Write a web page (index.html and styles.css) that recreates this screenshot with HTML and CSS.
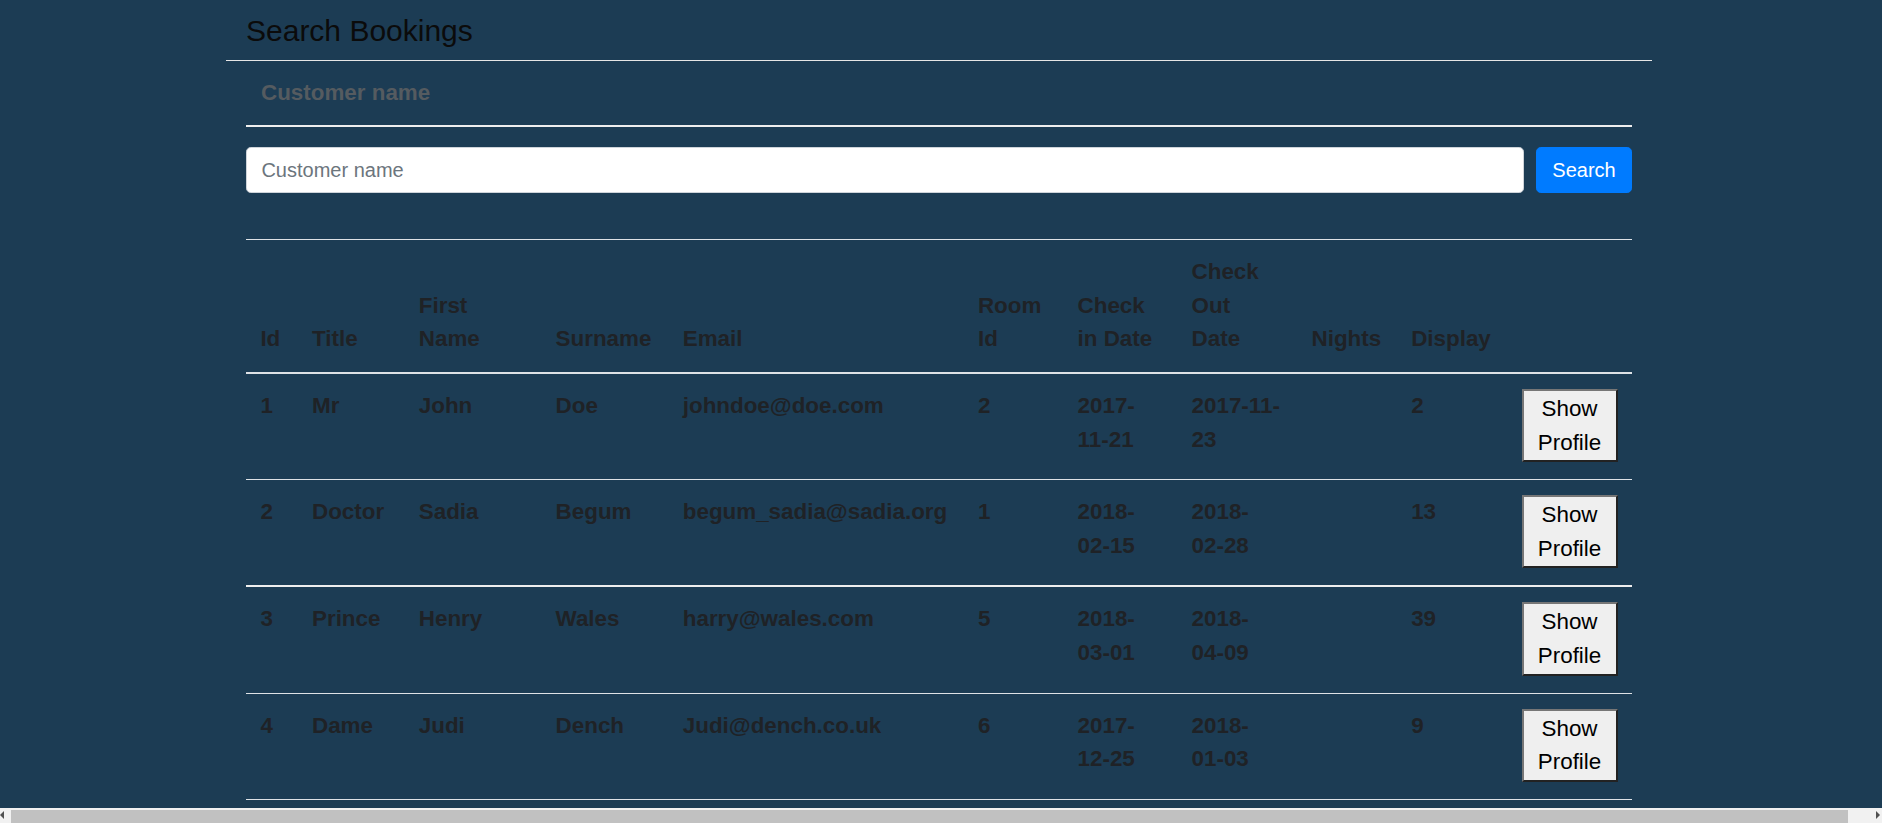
FILE: index.html
```html
<!DOCTYPE html>
<html lang="en">
<head>
<meta charset="utf-8">
<title>Search Bookings</title>
<link rel="stylesheet" href="styles.css">
</head>
<body>
<div class="page">
  <header class="page-header">
    <h1 class="page-title">Search Bookings</h1>
  </header>
  <main class="content">
    <div class="field-label">Customer name</div>
    <form class="search-row" onsubmit="return false">
      <input class="search-input" type="text" placeholder="Customer name">
      <button class="search-btn" type="submit">Search</button>
    </form>
    <table class="results">
      <colgroup>
        <col class="c-id"><col class="c-title"><col class="c-first"><col class="c-surname"><col class="c-email"><col class="c-room"><col class="c-in"><col class="c-out"><col class="c-nights"><col class="c-display"><col class="c-action">
      </colgroup>
      <thead>
        <tr>
          <th>Id</th><th>Title</th><th>First Name</th><th>Surname</th><th>Email</th><th>Room Id</th><th>Check in Date</th><th>Check Out Date</th><th>Nights</th><th>Display</th><th></th>
        </tr>
      </thead>
      <tbody>
        <tr>
          <td>1</td><td>Mr</td><td>John</td><td>Doe</td><td>johndoe@doe.com</td><td>2</td><td>2017-11-21</td><td class="date-out"><span class="nowrap">2017-11-</span>23</td><td></td><td>2</td>
          <td><button class="profile-btn" type="button">Show Profile</button></td>
        </tr>
        <tr class="row-strong">
          <td>2</td><td>Doctor</td><td>Sadia</td><td>Begum</td><td>begum_sadia@sadia.org</td><td>1</td><td>2018-02-15</td><td class="date-out">2018-02-28</td><td></td><td>13</td>
          <td><button class="profile-btn" type="button">Show Profile</button></td>
        </tr>
        <tr>
          <td>3</td><td>Prince</td><td>Henry</td><td>Wales</td><td>harry@wales.com</td><td>5</td><td>2018-03-01</td><td class="date-out">2018-04-09</td><td></td><td>39</td>
          <td><button class="profile-btn" type="button">Show Profile</button></td>
        </tr>
        <tr>
          <td>4</td><td>Dame</td><td>Judi</td><td>Dench</td><td>Judi@dench.co.uk</td><td>6</td><td>2017-12-25</td><td class="date-out">2018-01-03</td><td></td><td>9</td>
          <td><button class="profile-btn" type="button">Show Profile</button></td>
        </tr>
      </tbody>
    </table>
  </main>
</div>
<div class="hscroll" aria-hidden="true">
  <span class="hscroll-arrow hscroll-left"></span>
  <span class="hscroll-thumb"></span>
  <span class="hscroll-arrow hscroll-right"></span>
</div>
</body>
</html>
```

FILE: styles.css
```css
html, body {
  margin: 0;
  padding: 0;
}

body {
  background: #1c3c54;
  font-family: "Liberation Sans", Arial, sans-serif;
  color: #212529;
}

.page {
  width: 1426px;
  margin-left: 226px;
}

.page-header {
  padding: 14px 20px 11px;
  border-bottom: 1px solid #e6e6e6;
}

.page-title {
  margin: 0;
  font-size: 30px;
  font-weight: normal;
  line-height: 34.6px;
  color: #0b0b0b;
}

.content {
  padding: 0 20px;
}

.field-label {
  margin-top: 15px;
  padding: 0 15px 16px;
  font-size: 22.4px;
  line-height: 33.6px;
  font-weight: bold;
  color: #555b60;
  border-bottom: 2px solid #eeeeee;
}

.search-row {
  display: flex;
  gap: 12px;
  margin: 20px 0 46px;
}

.search-input {
  flex: 1;
  height: 46px;
  box-sizing: border-box;
  padding: 0 14.4px;
  border: 1px solid #ced4da;
  border-radius: 4.8px;
  background: #fff;
  font-family: inherit;
  font-size: 20px;
  color: #495057;
  outline: none;
}

.search-input::placeholder {
  color: #6c757d;
}

.search-btn {
  width: 96px;
  height: 46px;
  border: 1px solid #007bff;
  border-radius: 4.8px;
  background: #007bff;
  color: #fff;
  font-family: inherit;
  font-size: 20px;
  padding: 0;
  cursor: pointer;
}

.results {
  width: 1386px;
  table-layout: fixed;
  border-collapse: collapse;
  font-size: 22.4px;
  line-height: 33.6px;
  font-weight: bold;
  color: #1f2226;
}

.c-id { width: 51.6px; }
.c-title { width: 106.8px; }
.c-first { width: 136.8px; }
.c-surname { width: 127.2px; }
.c-email { width: 295.2px; }
.c-room { width: 99.6px; }
.c-in { width: 114px; }
.c-out { width: 120px; }
.c-nights { width: 99.6px; }
.c-display { width: 110.4px; }
.c-action { width: 124.8px; }

.results th {
  text-align: left;
  vertical-align: bottom;
  padding: 15px 14.4px 16px;
  border-top: 1px solid #dee2e6;
  border-bottom: 2px solid #dee2e6;
}

.results td {
  vertical-align: top;
  padding: 15px 14.4px 17px;
  border-top: 1px solid #dee2e6;
}

.results td.date-out {
  padding-right: 17.4px;
}

.nowrap {
  white-space: nowrap;
}

.results tbody tr:last-child td {
  border-bottom: 1px solid #dee2e6;
}

.results tbody tr.row-strong td {
  border-bottom: 2px solid #eeeeee;
}

.profile-btn {
  display: block;
  width: 96px;
  box-sizing: border-box;
  padding: 1px 6px;
  border: 2px solid;
  border-color: #767676 #222 #222 #767676;
  background: #efefef;
  color: #000;
  font-family: inherit;
  font-size: 22.4px;
  line-height: 33.6px;
  font-weight: normal;
  text-align: center;
  cursor: pointer;
}

/* horizontal scrollbar as shown in the captured window */
.hscroll {
  position: fixed;
  left: 0;
  right: 0;
  bottom: 0;
  height: 15px;
  background: #f1f1f1;
  display: flex;
  align-items: flex-end;
}

.hscroll-thumb {
  width: 1837px;
  height: 13px;
  background: #c1c1c1;
}

.hscroll-arrow {
  width: 11px;
  height: 15px;
  position: relative;
}

.hscroll-left::before,
.hscroll-right::before {
  content: "";
  position: absolute;
  top: 3px;
  left: 0;
  border-top: 4px solid transparent;
  border-bottom: 4px solid transparent;
}

.hscroll-left::before {
  border-right: 4px solid #505050;
}

.hscroll-right {
  margin-left: auto;
  width: 6px;
}

.hscroll-right::before {
  border-left: 4px solid #505050;
}
```
